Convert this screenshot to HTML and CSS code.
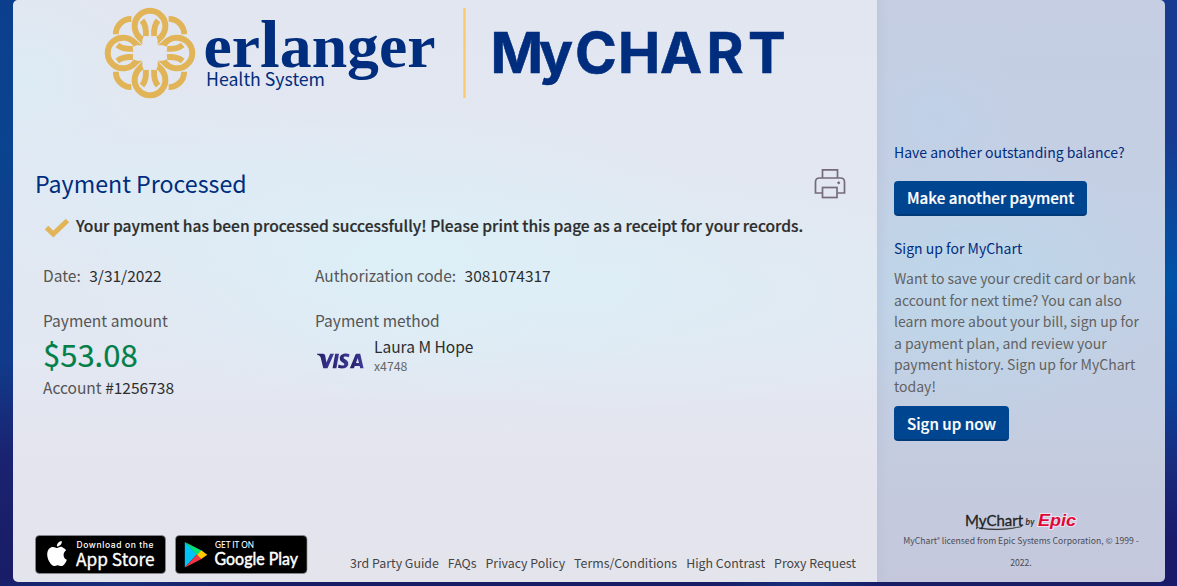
FILE: index.html
```html
<!DOCTYPE html>
<html lang="en">
<head>
<meta charset="utf-8">
<title>Payment Processed</title>
<link rel="stylesheet" href="styles.css">
</head>
<body>
<div class="shell">
  <main class="main">
    <svg class="brand" width="692" height="92" viewBox="104 7 692 92" role="img" aria-label="Erlanger Health System MyChart">
      <defs>
        <g id="petal">
          <path d="M118 100A46 46 0 1 1 164 100" stroke-width="18"/>
          <path d="M38.500 85A46 46 0 0 1 85 38.500M117 43Q131 60 128.500 90" stroke-width="17.500"/>
          <path d="M165 43Q151 60 153.500 90" stroke-width="17.500"/>
          <path d="M95 91L118 117V94L108 84ZM187 91L164 117V94L174 84Z" fill="#e1b458" stroke="none"/>
        </g>
      </defs>
      <g transform="translate(103 6) scale(.3333)" fill="none" stroke="#e1b458">
        <use href="#petal"/>
        <use href="#petal" transform="rotate(90 141 141)"/>
        <use href="#petal" transform="rotate(180 141 141)"/>
        <use href="#petal" transform="rotate(270 141 141)"/>
      </g>
      <g fill="#002d7d">
        <text class="serif" x="203.500" y="67" textLength="232" lengthAdjust="spacingAndGlyphs">er<tspan class="tall">l</tspan>anger</text>
        <text class="sub" x="206" y="86" textLength="119" lengthAdjust="spacingAndGlyphs">Health System</text>
        <text class="mychart" x="490.500 539 575 618 660 706.500 748" y="72.500">MyCHART</text>
      </g>
      <path d="M464.5 8V98" stroke="#fbca6c" stroke-width="2.4"/>
    </svg>

    <div class="title-row">
      <h1 class="title">Payment Processed</h1>
      <svg class="printer" width="32" height="32" viewBox="0 0 32 32" fill="none" stroke="#756b7d" stroke-width="1.7">
        <path d="M8.500 10V1.900H23.500V10"/>
        <path d="M8.500 25H1.500V14Q1.500 10 5.500 10H26.500Q30.500 10 30.500 14V25H23.500"/>
        <rect x="8.500" y="19.500" width="14.500" height="10"/>
        <circle cx="24.700" cy="14.800" r="1" fill="#756b7d" stroke-width="1"/>
      </svg>
    </div>

    <div class="message">
      <svg width="26" height="20" viewBox="0 0 26 20" fill="none" stroke="#e1b458" stroke-width="5"><path d="M2.500 9.700L9.300 16L23.500 2.500"/></svg>
      <strong class="message-text">Your payment has been processed successfully! Please print this page as a receipt for your records.</strong>
    </div>

    <div class="facts">
      <div class="fact"><span>Date:</span><b>3/31/2022</b></div>
      <div class="fact code"><span>Authorization code:</span><b>3081074317</b></div>
    </div>
    <div class="facts second">
      <div>
        <div class="line">Payment amount</div>
        <div class="amount">$53.08</div>
        <div class="line account">Account <b>#1256738</b></div>
      </div>
      <div>
        <div class="line">Payment method</div>
        <div class="card">
          <svg class="visa" width="50" height="20" viewBox="0 0 50 20">
            <defs><linearGradient id="vg"><stop stop-color="#241b66"/><stop offset="1" stop-color="#403f9d"/></linearGradient></defs>
            <g fill="url(#vg)">
              <path d="M2 2.800H8.200Q9.800 2.800 10.200 4.600L11.400 11.500L15.200 2.800H19L12.500 17.200H8.300L5.600 6.300Q5.200 4.900 2 3.600Z"/>
              <path d="M20.200 2.800H24L21.400 17.200H17.600Z"/>
              <path d="M34.500 3.200L33.900 6.200C31 5 28.600 5.200 28.600 6.700C28.600 8.300 33.300 8.500 33.300 12.500C33.300 17.500 27.500 18.300 23 16.700L23.600 13.600C26.500 15 29.400 14.900 29.400 13.200C29.400 11.400 24.800 11.100 24.800 7.400C24.800 2.900 30.500 1.700 34.500 3.200Z"/>
              <path fill-rule="evenodd" d="M41.800 2.800H45.200L48.600 17.200H45.200L44.700 15H39.800L38.900 17.200H34.900L40.300 3.900Q40.800 2.800 41.800 2.800ZM42.700 7L41 12H44Z"/>
            </g>
          </svg>
          <div><div class="holder">Laura M Hope</div><div class="digits">x4748</div></div>
        </div>
      </div>
    </div>

    <footer class="footer">
      <svg width="131" height="39" viewBox="0 0 131 39">
        <rect x=".5" y=".5" width="130" height="38" rx="4" stroke="#8c8c92" stroke-width=".7"/>
        <g fill="#fff">
          <path d="M28.500 13C25.500 10.300 23.800 13 22.200 13C20.700 13 18.800 11 15.800 12.400C11.500 14.500 11.200 21 14.200 26.500C18 33 19.700 30.700 22.500 30.200C25.500 30.500 27.200 33.200 30.600 27.500Q31.400 26.200 31.800 24.800C27.700 23 27.600 17.300 31.200 15.200Q30.200 13.700 28.500 13ZM21.900 11.500C21.700 8.400 24.100 6.200 26.800 6C27.100 9.200 24.600 11.500 21.900 11.500Z"/>
          <text class="store-small" x="41.500" y="12.500" textLength="77">Download on the</text>
          <text class="store-big" x="41" y="31" textLength="78.500" lengthAdjust="spacingAndGlyphs">App Store</text>
        </g>
      </svg>
      <svg width="133" height="39" viewBox="0 0 133 39">
        <rect x=".5" y=".5" width="131.500" height="38" rx="4" stroke="#8c8c92" stroke-width=".7"/>
        <path d="M9.800 7V32.500L22 19.500Z" fill="#00c4f5"/>
        <path d="M9.800 7L26.500 15.500L22 20Z" fill="#00e37b"/>
        <path d="M9.800 32.500L22 19.500L26.500 24Z" fill="#f83345"/>
        <path d="M26.300 15.300L32.300 19.700L26.300 24.100L22 19.700Z" fill="#ffc900"/>
        <g fill="#fff">
          <text class="get" x="40" y="12.500" textLength="39" lengthAdjust="spacingAndGlyphs">GET IT ON</text>
          <text class="play" x="39.500" y="30" textLength="83.500" lengthAdjust="spacingAndGlyphs">Google Play</text>
        </g>
      </svg>
      <nav class="links"><a>3rd Party Guide</a><a>FAQs</a><a>Privacy Policy</a><a>Terms/Conditions</a><a>High Contrast</a><a>Proxy Request</a></nav>
    </footer>
  </main>

  <aside class="side">
    <h2 class="side-title">Have another outstanding balance?</h2>
    <a class="button pay">Make another payment</a>
    <h2 class="side-title signup">Sign up for MyChart</h2>
    <p class="pitch">Want to save your credit card or bank<br>account for next time? You can also<br>learn more about your bill, sign up for<br>a payment plan, and review your<br>payment history. Sign up for MyChart<br>today!</p>
    <a class="button now">Sign up now</a>
    <div class="legal">
      <svg width="114" height="20" viewBox="0 0 114 20">
        <text class="mc" x="1" y="14" textLength="58" lengthAdjust="spacingAndGlyphs">MyChart</text>
        <path d="M13 14Q11 19 14 15.500Q34 19 58 14.500Q39 19.700 15 16.500" fill="#222" stroke="#222" stroke-width=".4"/>
        <text class="by" x="61.500" y="12.500" textLength="9">by</text>
        <text class="epic" x="74" y="14" textLength="38" lengthAdjust="spacingAndGlyphs">Epic</text>
      </svg>
      <p class="license">MyChart<sup>®</sup> licensed from Epic Systems Corporation, © 1999 -<br>2022.</p>
    </div>
  </aside>
</div>
</body>
</html>
```
FILE: styles.css
```css
* { box-sizing: border-box; }
body {
  margin: 0;
  height: 586px;
  overflow: hidden;
  padding: 0 12px 4px 13px;
  font-family: "Noto Sans CJK SC", "Noto Sans", sans-serif;
  font-size: 14.5px;
  color: #555;
  background:
    radial-gradient(150px 12px at 110px 100%, #182f7c, transparent),
    radial-gradient(90px 12px at 800px 100%, #182f7c, transparent),
    linear-gradient(#183a8f 0%, #183a8f 22%, #0052a6 48%, #0b419a 66%, #1a2a7c 80%, #1a1a6b 92%) right top / 20px 100% no-repeat,
    linear-gradient(#0b3f8d 0%, #0a438f 25%, #113a8a 62%, #1a2370 78%, #191b65 100%);
}
h1, h2, p { margin: 0; font-weight: 400; }
b { font-weight: 400; color: #2d2d2d; }
.shell { display: flex; height: 582px; border-radius: 5px; overflow: hidden; }
.main {
  width: 864px;
  display: flex;
  flex-direction: column;
  padding: 7px 21px 8px 22px;
  background:
    radial-gradient(330px 150px at 390px 255px, #dceff7, transparent),
    radial-gradient(420px 120px at 600px 290px, #deedf5, transparent),
    radial-gradient(260px 110px at 130px 190px, #deebf5, transparent),
    radial-gradient(120px 100px at 10px 80px, #dcebf4, transparent),
    linear-gradient(#e2e6f0 0, #e2e8f2 58%, #e4e4ee 82%, #e4e4ed 100%);
}
.brand { margin-left: 69px; flex: none; }
.serif { font: 700 61px "Liberation Serif", serif; }
.tall { font-size: 68px; }
.sub { font: 400 18px "Noto Sans CJK SC", sans-serif; }
.mychart { font: 700 56.500px Inter, sans-serif; stroke: #002d7d; stroke-width: .6px; }
.title-row { display: flex; justify-content: space-between; align-items: center; height: 32px; margin-top: 68px; padding-right: 10px; }
.title { font-size: 23.200px; line-height: 32px; color: #002d7d; }
.printer { position: relative; top: 1px; }
.message { display: flex; align-items: center; height: 24px; margin-top: 14px; padding-left: 9px; gap: 6px; }
.message svg { position: relative; top: 3px; }
.message-text { font-weight: 500; color: #2d2d2d; white-space: nowrap; font-size: 15.580px; -webkit-text-stroke: .2px #2d2d2d; }
.facts { display: grid; grid-template-columns: 272px 1fr; padding-left: 8px; margin-top: 26px; line-height: 24px; font-size: 15.530px; }
.second { margin-top: 21px; }
.fact { display: flex; gap: 8.500px; }
.line { height: 24px; }
.amount { font-size: 31px; line-height: 40px; margin-top: 2px; color: #008048; -webkit-text-stroke: .2px #008048; }
.account { margin-top: 1px; }
.card { display: flex; gap: 9px; }
.visa { margin-top: 19px; }
.holder { color: #2d2d2d; line-height: 24px; margin-top: 2px; }
.digits { font-size: 12.300px; line-height: 14px; margin-top: 1px; color: #666; }
.footer { display: flex; margin-top: auto; gap: 9px; height: 39px; }
.links { display: flex; gap: 9px; margin-left: auto; padding: 17px 0 0; font-size: 12.380px; line-height: 22px; color: #444; white-space: nowrap; }
.store-small { font: 500 8.500px Inter, sans-serif; }
.store-big { font: 400 17px "Noto Sans CJK SC", sans-serif; stroke: #fff; stroke-width: .3px; }
.get { font: 500 8.500px Lato, sans-serif; }
.play { font: 400 18px Lato, sans-serif; stroke: #fff; stroke-width: .5px; }
.side {
  width: 288px;
  display: flex;
  flex-direction: column;
  align-items: flex-start;
  padding: 141px 17px 0;
  background:
    linear-gradient(90deg, #aeb8d044, transparent 12px),
    radial-gradient(190px 140px at 100px 290px, #bdd7ea, transparent),
    radial-gradient(90px 80px at 60px 120px, #c0d1e7, transparent),
    linear-gradient(#c5cee2, #c3d0e5 50%, #c4cce0 76%, #c5c8dc);
}
.side-title { font-size: 14px; line-height: 22px; color: #002d7d; }
.button { height: 35px; padding: 0 13px; border-radius: 4px; background: #00458f; border-bottom: 2px solid #003a78; color: #fff; font-weight: 500; font-size: 15.200px; line-height: 33px; white-space: nowrap; -webkit-text-stroke: .2px #fff; }
.pay { margin-top: 18px; width: 193px; }
.signup { margin-top: 21px; }
.pitch { margin-top: 9px; font-size: 14px; line-height: 21.600px; color: #626262; white-space: nowrap; }
.now { margin-top: 8px; width: 115px; line-height: 35px; }
.legal { align-self: stretch; text-align: center; margin-top: 71px; }
.legal svg { display: block; margin-left: 70px; }
.license { font-size: 8.640px; line-height: 22px; margin-top: -3px; color: #4c4c55; white-space: nowrap; }
.license sup { font-size: 6px; line-height: 0; vertical-align: 2px; }
.mc { font: 400 15px Lato, sans-serif; fill: #222; stroke: #222; stroke-width: .3px; }
.by { font: italic 700 8.500px Lato, sans-serif; fill: #333; }
.epic { font: italic 700 16px "Liberation Sans", sans-serif; fill: #df0838; stroke: #ebe4ee; stroke-width: 2px; paint-order: stroke; }
```
